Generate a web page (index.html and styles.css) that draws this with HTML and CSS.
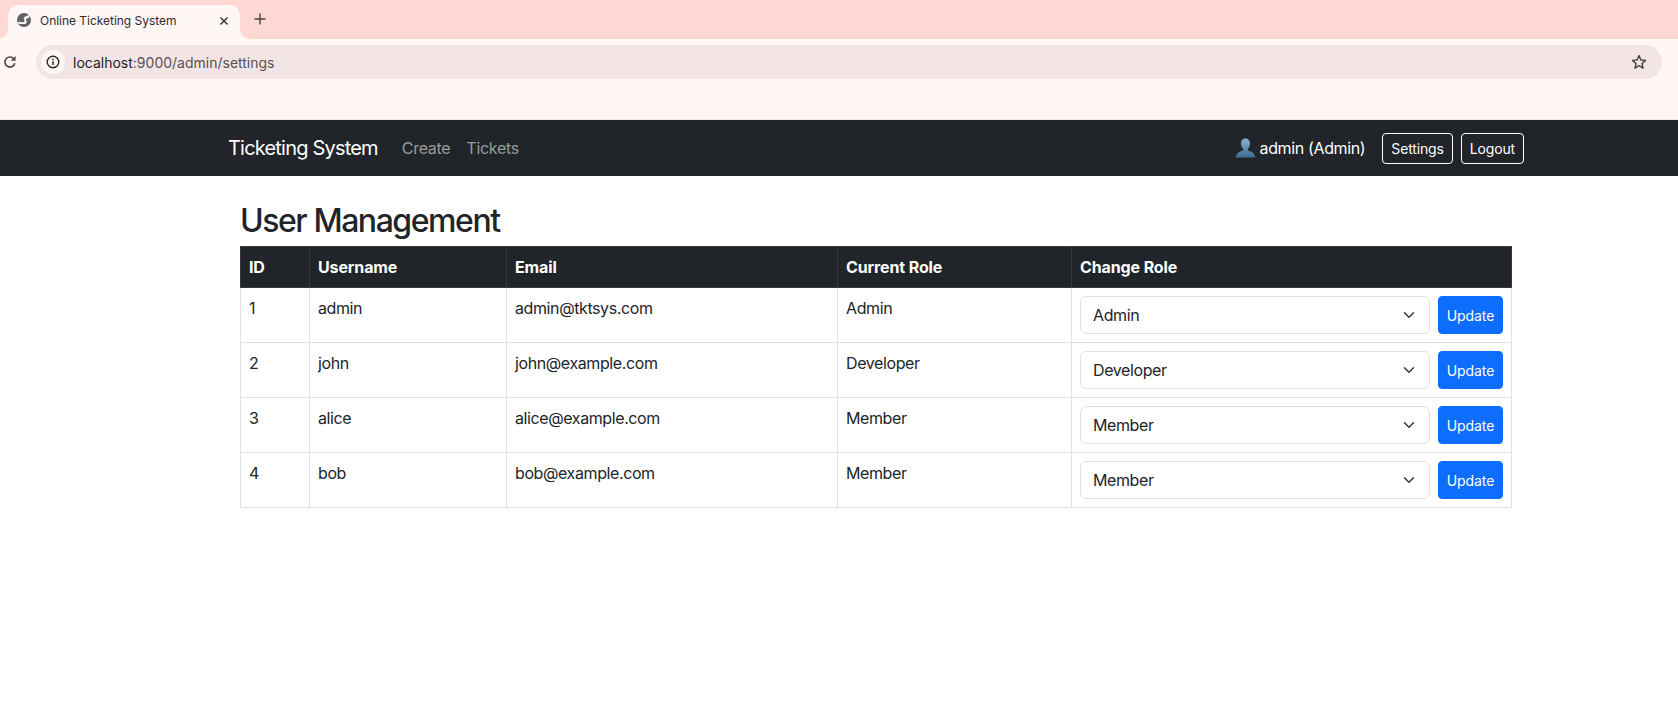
FILE: index.html
```html
<!DOCTYPE html>
<html lang="en">
<head>
<meta charset="UTF-8">
<title>Online Ticketing System</title>
<link rel="stylesheet" href="styles.css">
</head>
<body>
<div class="tabstrip">
    <div class="tab">
        <svg class="tab-globe" width="14" height="14" viewBox="0 0 14 14"><circle cx="7" cy="7" r="7" fill="#5f6368"/><path d="M0.6 9.5 C3 7.5 5.6 10.5 7.2 8.6 C8.4 7 6 6 7 4.6 C8 3.2 10.4 3.8 11.4 1.6 L12.8 3.4 C12 5.4 9.6 5 9 6.2 C8.6 7.2 10.6 8 9.4 10 C8 12.4 4 10 1.4 11 Z" fill="#fff7f5"/></svg>
        <span class="tab-title">Online Ticketing System</span>
        <svg class="tab-close" width="10" height="10" viewBox="0 0 10 10"><path d="M1.5 1.5 L8.5 8.5 M8.5 1.5 L1.5 8.5" stroke="#3c3636" stroke-width="1.5"/></svg>
    </div>
    <svg class="tab-new" width="12" height="12" viewBox="0 0 12 12"><path d="M6 0.5 V11.5 M0.5 6 H11.5" stroke="#4a4040" stroke-width="1.4"/></svg>
</div>
<div class="toolbar">
    <svg class="reload" width="14" height="14" viewBox="0 0 14 14"><path d="M11.8 8.2 A5 5 0 1 1 10.6 3.6" fill="none" stroke="#5a4545" stroke-width="1.7"/><path d="M12.6 1 V5.8 H7.8 Z" fill="#5a4545"/></svg>
    <div class="urlbar">
        <span class="info-chip">
            <svg width="14" height="14" viewBox="0 0 14 14"><circle cx="7" cy="7" r="5.8" fill="none" stroke="#2e2a2a" stroke-width="1.4"/><path d="M7 6.2 V10" stroke="#2e2a2a" stroke-width="1.5"/><circle cx="7" cy="4.3" r="0.9" fill="#2e2a2a"/></svg>
        </span>
        <span class="url"><span class="url-host">localhost</span>:9000/admin/settings</span>
        <svg class="star" width="16" height="16" viewBox="0 0 16 16"><path d="M8 1.6 L9.9 6 L14.6 6.4 L11 9.5 L12.1 14.1 L8 11.7 L3.9 14.1 L5 9.5 L1.4 6.4 L6.1 6 Z" fill="none" stroke="#4a4040" stroke-width="1.4" stroke-linejoin="round"/></svg>
    </div>
</div>

<nav class="navbar">
    <div class="navbar-inner">
        <a class="brand">Ticketing System</a>
        <a class="nav-link">Create</a>
        <a class="nav-link">Tickets</a>
        <div class="nav-right">
            <svg class="user-icon" width="21" height="20" viewBox="0 0 21 20">
                <defs><linearGradient id="bust" x1="0" y1="0" x2="0" y2="1"><stop offset="0" stop-color="#8fb0cc"/><stop offset="1" stop-color="#3c6c95"/></linearGradient></defs>
                <path d="M10.5 0.5 C13.6 0.5 15.2 3 15 6 C14.8 8.4 13.8 10 12.8 11 L13 12.6 C15.8 13.6 19.4 14.6 20.4 19.5 H0.6 C1.6 14.6 5.2 13.6 8 12.6 L8.2 11 C7.2 10 6.2 8.4 6 6 C5.8 3 7.4 0.5 10.5 0.5 Z" fill="url(#bust)"/>
            </svg>
            <span class="user-name">admin (Admin)</span>
            <a class="btn-outline btn-settings">Settings</a>
            <a class="btn-outline">Logout</a>
        </div>
    </div>
</nav>

<main class="content">
    <h1>User Management</h1>
    <table class="users">
        <colgroup>
            <col class="col-id"><col class="col-user"><col class="col-email"><col class="col-role"><col class="col-change">
        </colgroup>
        <thead>
            <tr><th>ID</th><th>Username</th><th>Email</th><th>Current Role</th><th>Change Role</th></tr>
        </thead>
        <tbody>
            <tr>
                <td>1</td><td>admin</td><td>admin@tktsys.com</td><td>Admin</td>
                <td><form class="role-form"><select class="role-select"><option selected>Admin</option><option>Developer</option><option>Member</option></select><button type="button" class="btn-update">Update</button></form></td>
            </tr>
            <tr>
                <td>2</td><td>john</td><td>john@example.com</td><td>Developer</td>
                <td><form class="role-form"><select class="role-select"><option>Admin</option><option selected>Developer</option><option>Member</option></select><button type="button" class="btn-update">Update</button></form></td>
            </tr>
            <tr>
                <td>3</td><td>alice</td><td>alice@example.com</td><td>Member</td>
                <td><form class="role-form"><select class="role-select"><option>Admin</option><option>Developer</option><option selected>Member</option></select><button type="button" class="btn-update">Update</button></form></td>
            </tr>
            <tr>
                <td>4</td><td>bob</td><td>bob@example.com</td><td>Member</td>
                <td><form class="role-form"><select class="role-select"><option>Admin</option><option>Developer</option><option selected>Member</option></select><button type="button" class="btn-update">Update</button></form></td>
            </tr>
        </tbody>
    </table>
</main>
</body>
</html>
```

FILE: styles.css
```css
* {
    box-sizing: border-box;
}
body {
    margin: 0;
    background: #fff;
    color: #212529;
    font-family: Inter, "Liberation Sans", sans-serif;
    font-size: 16px;
    line-height: 1.5;
}

/* browser chrome */
.tabstrip {
    height: 39px;
    background: #ffd8d4;
    display: flex;
    align-items: flex-end;
    padding-left: 8px;
}
.tab {
    position: relative;
    width: 232px;
    height: 34px;
    background: #fff7f5;
    border-radius: 10px 10px 0 0;
    display: flex;
    align-items: center;
    padding: 0 11px 2px 9px;
}
.tab::before,
.tab::after {
    content: "";
    position: absolute;
    bottom: 0;
    width: 10px;
    height: 10px;
}
.tab::before {
    left: -10px;
    background: radial-gradient(circle at 0 0, #ffd8d4 9.5px, #fff7f5 10px);
}
.tab::after {
    right: -10px;
    background: radial-gradient(circle at 100% 0, #ffd8d4 9.5px, #fff7f5 10px);
}
.tab-globe {
    margin-bottom: 2px;
}
.tab-title {
    margin-left: 9px;
    font-size: 12px;
    letter-spacing: -0.03px;
    color: #2e2a2a;
    flex: 1;
    white-space: nowrap;
}
.tab-new {
    margin: 0 0 14px 14px;
}
.toolbar {
    height: 81px;
    background: #fff7f5;
    border-bottom: 1px solid #f5e6e3;
    display: flex;
    align-items: flex-start;
    padding: 6px 16px 0 3px;
}
.reload {
    margin: 10px 19px 0 0;
}
.urlbar {
    flex: 1;
    height: 34px;
    background: #f3e5e6;
    border-radius: 17px;
    display: flex;
    align-items: center;
    padding: 0 15px 0 5px;
}
.info-chip {
    width: 24px;
    height: 24px;
    border-radius: 50%;
    background: #fff7f5;
    display: flex;
    align-items: center;
    justify-content: center;
}
.url {
    margin-left: 8px;
    flex: 1;
    font-size: 14px;
    color: #5a5050;
}
.url-host {
    color: #1f1b1b;
}

/* navbar */
.navbar {
    height: 56px;
    background: #212529;
}
.navbar-inner {
    width: 1296px;
    height: 100%;
    margin-left: 228px;
    display: flex;
    align-items: center;
}
.brand {
    font-size: 20px;
    letter-spacing: -0.8px;
    color: #fff;
    margin-right: 24px;
}
.nav-link {
    color: rgba(255, 255, 255, 0.55);
    letter-spacing: -0.3px;
    margin-right: 16px;
}
.nav-right {
    margin-left: auto;
    display: flex;
    align-items: center;
}
.user-icon {
    margin-right: 4px;
}
.user-name {
    color: #fff;
    letter-spacing: -0.36px;
    margin-right: 17px;
}
.btn-outline {
    height: 31px;
    padding: 0 8px;
    border: 1px solid #fff;
    border-radius: 4px;
    color: #fff;
    font-size: 14px;
    letter-spacing: -0.15px;
    line-height: 29px;
}
.btn-settings {
    margin-right: 8px;
}

/* content */
.content {
    width: 1272px;
    margin-left: 240px;
    padding-top: 26px;
}
h1 {
    margin: 0 0 6px;
    font-size: 32px;
    font-weight: 500;
    letter-spacing: -1.45px;
    line-height: 38px;
}
.users {
    width: 100%;
    table-layout: fixed;
    border-collapse: collapse;
}
.col-id { width: 69px; }
.col-user { width: 197px; }
.col-email { width: 331px; }
.col-role { width: 234px; }
.users th,
.users td {
    border: 1px solid #dee2e6;
    padding: 8px;
    text-align: left;
    vertical-align: top;
    letter-spacing: -0.4px;
}
.users th {
    background: #212529;
    border-color: #373b3e;
    color: #fff;
    font-weight: 700;
    letter-spacing: -0.12px;
}
.role-form {
    display: flex;
    gap: 8px;
}
.role-select {
    flex: 1;
    min-width: 0;
    height: 38px;
    padding: 0 36px 0 12px;
    appearance: none;
    background: #fff url("data:image/svg+xml,%3csvg xmlns='http://www.w3.org/2000/svg' viewBox='0 0 16 16'%3e%3cpath fill='none' stroke='%23343a40' stroke-linecap='round' stroke-linejoin='round' stroke-width='2' d='m2 5 6 6 6-6'/%3e%3c/svg%3e") no-repeat right 12px center / 16px 12px;
    border: 1px solid #dee2e6;
    border-radius: 6px;
    color: #212529;
    font-family: inherit;
    font-size: 16px;
    letter-spacing: -0.4px;
}
.btn-update {
    height: 38px;
    width: 65px;
    padding: 0;
    background: #0d6efd;
    border: 1px solid #0d6efd;
    border-radius: 4px;
    color: #fff;
    font-family: inherit;
    font-size: 14px;
    letter-spacing: -0.1px;
}
```
